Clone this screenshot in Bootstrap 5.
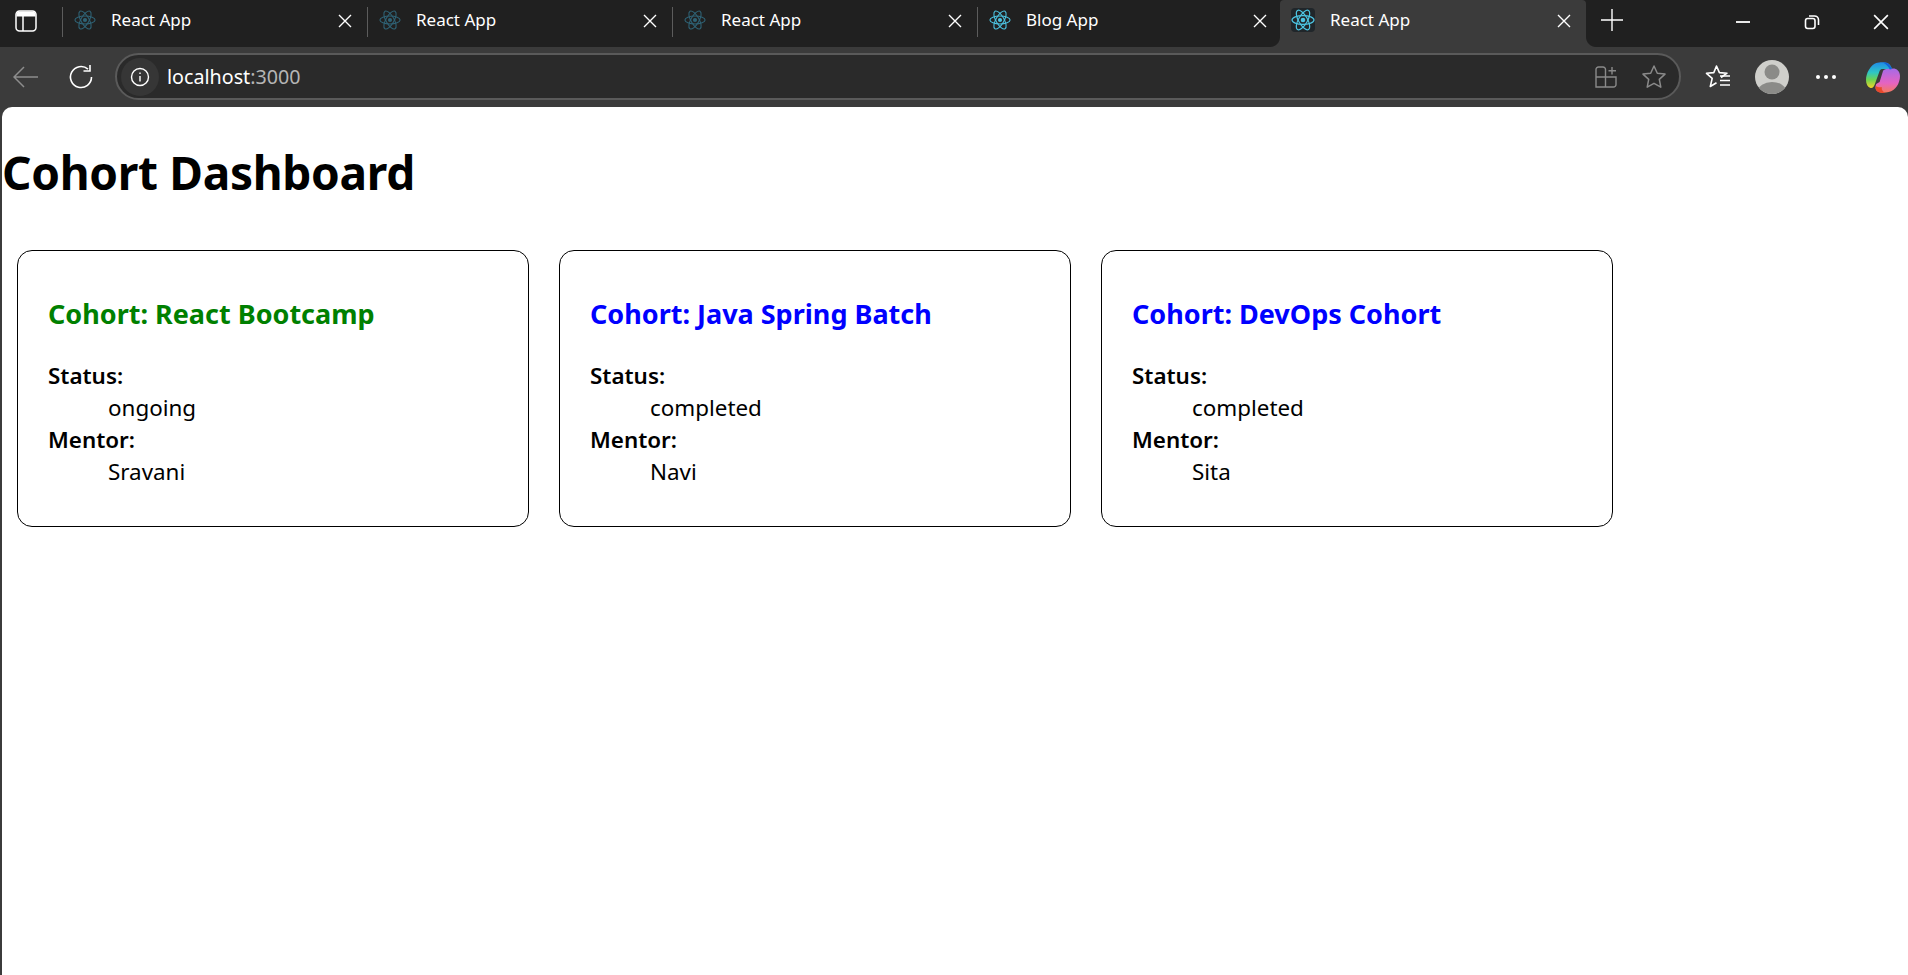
<!DOCTYPE html>
<html>
<head>
    <title>React App</title>
    <link href="https://cdn.jsdelivr.net/npm/bootstrap@5.3.0/dist/css/bootstrap.min.css" rel="stylesheet">
    <style>
        body {
            background-color: #3b3b3b;
            color: #000;
            font-family: "Noto Sans", "Open Sans", sans-serif;
            overflow: hidden;
        }

        /* barra de abas */
        .tab-strip {
            height: 47px;
            background-color: #202020;
            padding-left: 62px;
        }

        .side-btn {
            width: 62px;
            margin-left: -62px;
            padding: 0 0 6px 15px;
        }

        .tab-item {
            width: 305px;
            height: 47px;
            color: #fff;
            font-size: 17px;
            padding: 0 0 7px 12px;
            position: relative;
        }

        .tab-item::before {
            content: "";
            position: absolute;
            left: 0;
            top: 7px;
            height: 30px;
            width: 1px;
            background-color: #5c5c5c;
        }

        .tab-item.ativa {
            background-color: #3b3b3b;
            border-radius: 4px 4px 0 0;
            width: 306px;
            margin-left: -2px;
            padding-left: 11px;
        }

        /* cantos curvos ao lado da aba ativa */
        .tab-item.ativa::before,
        .tab-item.ativa::after {
            content: "";
            position: absolute;
            top: auto;
            bottom: 0;
            width: 10px;
            height: 10px;
            background-color: transparent;
        }

        .tab-item.ativa::before {
            left: -10px;
            background-image: radial-gradient(circle at 0 0, #202020 9.5px, #3b3b3b 10.5px);
        }

        .tab-item.ativa::after {
            left: 100%;
            background-image: radial-gradient(circle at 100% 0, #202020 9.5px, #3b3b3b 10.5px);
        }

        .tab-titulo {
            margin-left: 15px;
            flex-grow: 1;
        }

        .tab-x {
            margin: 2px 15px 0 0;
            flex-shrink: 0;
        }

        .favicon-ativo {
            color: #4cc3e0;
            background-color: #20262a;
            border-radius: 4px;
        }

        .plus-btn {
            margin: 0 0 7px 15px;
        }

        .win-btns {
            margin-left: auto;
            padding: 0 19px 4px 0;
            gap: 53px;
        }

        /* barra de endereco */
        .tool-bar {
            height: 60px;
            padding-left: 13px;
            background-color: #3b3b3b;
        }

        .nav-gap {
            margin-left: 29px;
        }

        .addr-bar {
            width: 1566px;
            height: 47px;
            margin-left: 21px;
            margin-top: -1px;
            background-color: #2a2a2a;
            border: 2px solid #5a5a5a;
            border-radius: 24px;
            padding: 0 12px 0 4px;
            color: #fff;
            font-size: 19.7px;
        }

        .info-circle {
            width: 38px;
            height: 38px;
            border-radius: 50%;
            background-color: #363636;
            margin-right: 8px;
        }

        .porta {
            color: #b5b5b5;
        }

        .addr-dir {
            margin-left: auto;
            gap: 24px;
        }

        .tool-dir {
            margin-left: 24px;
        }

        .avatar-img {
            margin-left: 24px;
        }

        .dots-img {
            margin-left: 26px;
        }

        .copilot-img {
            margin-left: 29px;
        }

        /* pagina */
        .pagina {
            height: 868px;
            margin-left: 2px;
            background-color: #fff;
            border-radius: 10px 10px 0 0;
        }

        .titulo-pagina {
            font-size: 46px;
            font-weight: 700;
            line-height: 64px;
            letter-spacing: -0.3px;
            margin: 0;
            padding-top: 33px;
            box-sizing: content-box;
        }

        .grade-cohort {
            padding: 46px 0 0 15px;
            gap: 30px;
        }

        .cartao {
            width: 512px;
            height: 277px;
            border: 1px solid #000;
            border-radius: 15px;
            padding: 42px 30px 0;
        }

        .cartao h3 {
            font-size: 27px;
            font-weight: 700;
            line-height: 42px;
            margin: 0 0 25px;
        }

        .cor-ongoing {
            color: #008000;
        }

        .cor-completed {
            color: #0000ff;
        }

        .cartao dl {
            margin: 0;
            font-size: 22.4px;
            line-height: 32px;
        }

        .cartao dt {
            font-weight: 600;
        }

        .cartao dd {
            margin: 0 0 0 60px;
        }
    </style>
</head>
<body>
    <svg width="0" height="0" class="d-block">
        <symbol id="atomo" viewBox="0 0 24 24">
            <circle cx="12" cy="12" r="2.3" fill="currentColor"/>
            <g fill="none" stroke="currentColor" stroke-width="1.2">
                <ellipse cx="12" cy="12" rx="11" ry="4.4"/>
                <ellipse cx="12" cy="12" rx="11" ry="4.4" transform="rotate(60 12 12)"/>
                <ellipse cx="12" cy="12" rx="11" ry="4.4" transform="rotate(120 12 12)"/>
            </g>
        </symbol>
        <symbol id="fechar" viewBox="0 0 14 14">
            <path d="M1 1l12 12M13 1L1 13" stroke="currentColor" stroke-width="1.4" fill="none"/>
        </symbol>
    </svg>

    <div class="tab-strip d-flex align-items-center">
        <div class="side-btn d-flex align-items-center">
            <svg width="22" height="22" viewBox="0 0 22 22" fill="none">
                <rect x="1" y="1" width="20" height="20" rx="3.5" stroke="#fff" stroke-width="1.5"/>
                <path d="M1.500 4.500a3 3 0 0 1 3-3h13a3 3 0 0 1 3 3v2h-19z" fill="#fff"/>
                <path d="M8 6v15" stroke="#fff" stroke-width="1.5"/>
            </svg>
        </div>
        <div class="tab-item d-flex align-items-center">
            <svg width="22" height="22" style="color:#2f6376"><use href="#atomo"/></svg>
            <span class="tab-titulo">React App</span>
            <svg width="14" height="14" class="tab-x"><use href="#fechar"/></svg>
        </div>
        <div class="tab-item d-flex align-items-center">
            <svg width="22" height="22" style="color:#2f6376"><use href="#atomo"/></svg>
            <span class="tab-titulo">React App</span>
            <svg width="14" height="14" class="tab-x"><use href="#fechar"/></svg>
        </div>
        <div class="tab-item d-flex align-items-center">
            <svg width="22" height="22" style="color:#2f6376"><use href="#atomo"/></svg>
            <span class="tab-titulo">React App</span>
            <svg width="14" height="14" class="tab-x"><use href="#fechar"/></svg>
        </div>
        <div class="tab-item d-flex align-items-center">
            <svg width="22" height="22" style="color:#4cc3e0"><use href="#atomo"/></svg>
            <span class="tab-titulo">Blog App</span>
            <svg width="14" height="14" class="tab-x"><use href="#fechar"/></svg>
        </div>
        <div class="tab-item ativa d-flex align-items-center">
            <svg width="24" height="24" class="favicon-ativo"><use href="#atomo"/></svg>
            <span class="tab-titulo">React App</span>
            <svg width="14" height="14" class="tab-x"><use href="#fechar"/></svg>
        </div>
        <svg width="22" height="22" viewBox="0 0 22 22" class="plus-btn"><path d="M11 0v22M0 11h22" stroke="#fff" stroke-width="1.4"/></svg>
        <div class="win-btns d-flex align-items-center">
            <svg width="16" height="16" viewBox="0 0 16 16"><path d="M1 8h14" stroke="#fff" stroke-width="1.8"/></svg>
            <svg width="16" height="16" viewBox="0 0 16 16" fill="none" stroke="#fff" stroke-width="1.6"><rect x="1.500" y="4.500" width="9.500" height="10" rx="2.200"/><path d="M5 2h5.500A4 4 0 0 1 14.500 6v5"/></svg>
            <svg width="16" height="16" style="color:#fff"><use href="#fechar"/></svg>
        </div>
    </div>

    <div class="tool-bar d-flex align-items-center">
        <svg width="26" height="24" viewBox="0 0 26 24" fill="none" stroke="#8d8d8d" stroke-width="1.5"><path d="M1 12h24M11 2L1 12l10 10"/></svg>
        <svg width="26" height="26" viewBox="0 0 26 26" fill="none" stroke="#fff" stroke-width="1.6" class="nav-gap"><path d="M23.500 13A10.500 10.500 0 1 1 20 5.200"/><path d="M22 1v6h-6.500"/></svg>
        <div class="addr-bar d-flex align-items-center">
            <div class="info-circle d-flex align-items-center justify-content-center">
                <svg width="20" height="20" viewBox="0 0 20 20" fill="none" stroke="#fff" stroke-width="1.4"><circle cx="10" cy="10" r="8.500"/><path d="M10 9v5.500M10 5.500v1.600"/></svg>
            </div>
            <span>localhost<span class="porta">:3000</span></span>
            <div class="addr-dir d-flex align-items-center">
                <svg width="22" height="22" viewBox="0 0 22 22" fill="none" stroke="#8a8a8a" stroke-width="1.4"><path d="M1 11h20v7.500a2.500 2.500 0 0 1-2.500 2.500H1zM1 11V3.500A2.500 2.500 0 0 1 3.500 1H8a2.500 2.500 0 0 1 2.500 2.500V21"/><path d="M17 1v7.500M13.500 4.700H21"/></svg>
                <svg width="26" height="26" viewBox="0 0 26 26" fill="none" stroke="#8a8a8a" stroke-width="1.5"><path d="M13 2l3.300 7.200 7.700.9-5.700 5.300 1.500 7.800-6.800-3.900-6.800 3.900 1.500-7.800L2 10.100l7.700-.9z" stroke-linejoin="round"/></svg>
            </div>
        </div>
        <div class="tool-dir d-flex align-items-center">
            <svg width="26" height="26" viewBox="0 0 26 26" fill="none" stroke="#fff" stroke-width="1.6"><path d="M16 13.500l6-4.300-7.600-.6L11.500 2 8.800 8.600 1.500 9.300l5.700 5.100-1.900 8.100 6.200-3.700" stroke-linejoin="round"/><path d="M15 12h10M15 16.500h10M15 21h10"/></svg>
            <svg width="34" height="34" viewBox="0 0 34 34" class="avatar-img"><defs><clipPath id="circ"><circle cx="17" cy="17" r="17"/></clipPath></defs><circle cx="17" cy="17" r="17" fill="#cfcfcb"/><g clip-path="url(#circ)" fill="#8b8b88"><circle cx="17" cy="12" r="7.500"/><ellipse cx="17" cy="31" rx="14" ry="9"/></g></svg>
            <svg width="22" height="6" viewBox="0 0 22 6" fill="#fff" class="dots-img"><circle cx="3" cy="3" r="2"/><circle cx="11" cy="3" r="2"/><circle cx="19" cy="3" r="2"/></svg>
            <svg width="34" height="31" viewBox="0 0 30 31" preserveAspectRatio="none" class="copilot-img">
                <defs>
                    <linearGradient id="cp1" x1="0" y1="0" x2="0" y2="1"><stop offset="0" stop-color="#1f8ae8"/><stop offset=".4" stop-color="#2fc6c4"/><stop offset=".68" stop-color="#6fd44e"/><stop offset="1" stop-color="#f3d32a"/></linearGradient>
                    <linearGradient id="cp2" x1="0" y1="0" x2="0" y2="1"><stop offset="0" stop-color="#a56be8"/><stop offset=".6" stop-color="#e563c2"/><stop offset="1" stop-color="#f47a5a"/></linearGradient>
                </defs>
                <path d="M9 1C12 0 17 0 19 1c2 1 3 3 4 6h-9c-1 0-1.500 1-2 2L8.500 20C7.500 24 6 26.500 4 26 1.500 25 0 22 0 18 0 11 4 3 9 1z" fill="url(#cp1)"/>
                <path d="M18 7l6-.5C27 6.500 30 9 30 14c0 7-4 15-10 16-3 1-7 1-9 0-2-1-3-3-2.500-6L9 22l3-2L15 9c.5-1 1.500-2 3-2z" fill="url(#cp2)"/>
                <path d="M17 .5c2 .5 4 1.500 6 6.500l-2 .5C20 5 18 2 15 .5z" fill="#1463d8"/>
                <path d="M8.500 24c2 1.500 4 1.500 5.500 1-.5 2.500.5 4.500 3 5.700-2.500.5-4.500.3-6-.7-2-1-3-3-2.500-6z" fill="#e8482c"/>
            </svg>
        </div>
    </div>

    <div class="pagina">
        <h1 class="titulo-pagina">Cohort Dashboard</h1>
        <div class="grade-cohort d-flex">
            <div class="cartao">
                <h3 class="cor-ongoing">Cohort: React Bootcamp</h3>
                <dl>
                    <dt>Status:</dt>
                    <dd>ongoing</dd>
                    <dt>Mentor:</dt>
                    <dd>Sravani</dd>
                </dl>
            </div>
            <div class="cartao">
                <h3 class="cor-completed">Cohort: Java Spring Batch</h3>
                <dl>
                    <dt>Status:</dt>
                    <dd>completed</dd>
                    <dt>Mentor:</dt>
                    <dd>Navi</dd>
                </dl>
            </div>
            <div class="cartao">
                <h3 class="cor-completed">Cohort: DevOps Cohort</h3>
                <dl>
                    <dt>Status:</dt>
                    <dd>completed</dd>
                    <dt>Mentor:</dt>
                    <dd>Sita</dd>
                </dl>
            </div>
        </div>
    </div>

    <script src="https://cdn.jsdelivr.net/npm/bootstrap@5.3.0/dist/js/bootstrap.bundle.min.js"></script>
</body>
</html>
